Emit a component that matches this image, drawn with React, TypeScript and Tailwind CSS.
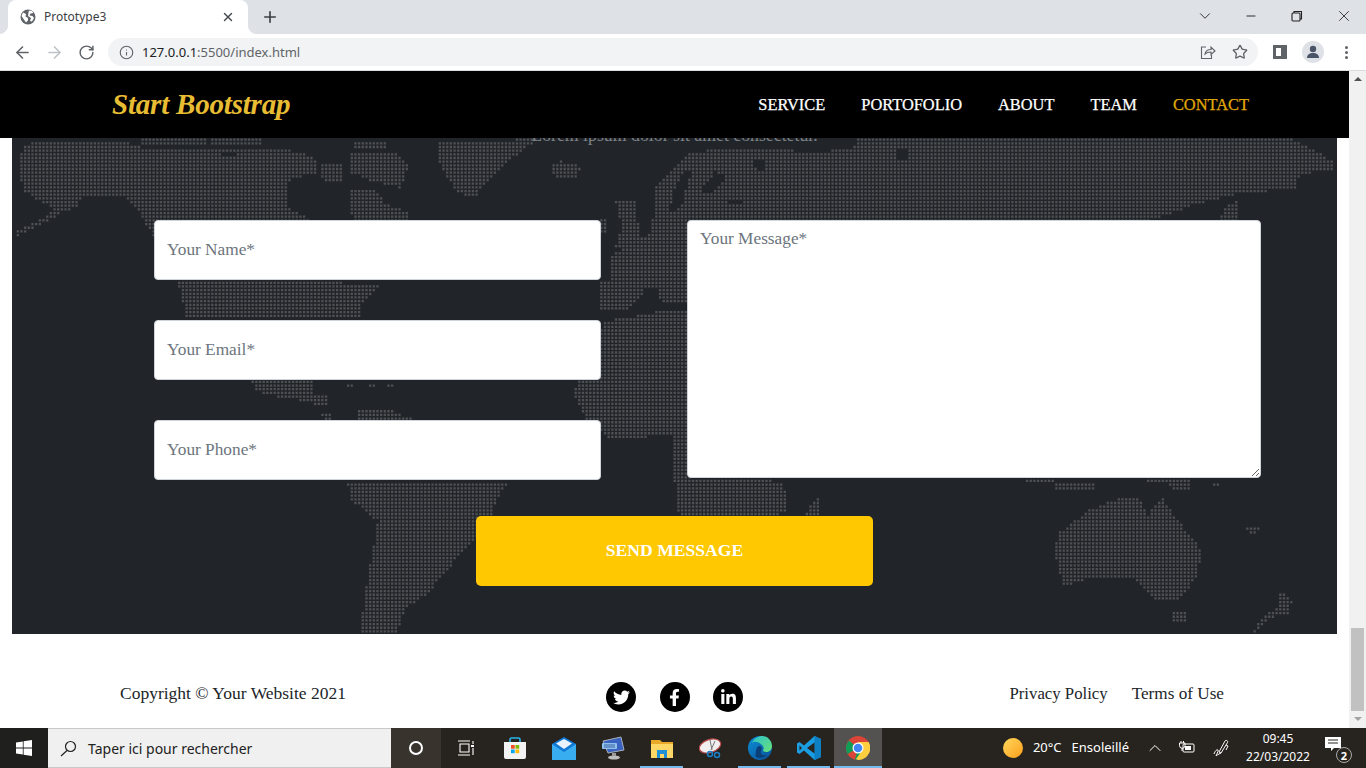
import React from 'react';
import { ArrowLeft, ArrowRight, RotateCw, Info, Star, Plus, X, ChevronDown, ChevronUp, Minus } from 'lucide-react';
import { FaTwitter, FaFacebookF, FaLinkedinIn } from 'react-icons/fa';

// continents in page coordinates, the dot grid is tested against these
const LAND: string[] = [
  // north america
  '22,143 60,139 121,139 139,146 204,146 260,148 300,150 316,158 316,172 290,178 286,187 286,205 308,218 312,224 152,235 139,213 126,197 82,195 74,207 60,212 43,222 14,236 13,230 40,218 52,207 22,190 17,167',
  '139,138 204,138 204,143 139,143',
  '208,138 260,138 260,143 208,143',
  '176,280 377,282 377,288 360,303 358,318 186,318',
  '251,380 312,380 312,392 327,393 328,407 295,398 273,395 256,390',
  '346,381 352,381 352,385 346,385',
  '367,381 373,381 373,385 367,385',
  '387,381 393,381 393,385 387,385',
  // arctic islands and labrador
  '320,163 343,163 343,183 320,178',
  '347,150 395,150 408,165 399,187 370,180 347,170',
  '351,139 386,139 386,147 351,147',
  '347,187 377,190 382,202 394,206 408,213 410,224 352,224 349,205',
  // greenland, iceland
  '438,140 538,138 516,153 486,180 473,197 455,190 438,163',
  '549,163 560,160 579,165 577,175 560,178 552,175',
  // central america, south america
  '319,412 330,412 330,420 325,420',
  '355,410 385,407 400,413 416,420 355,420',
  '345,480 507,480 494,503 492,523 468,543 451,563 427,592 405,607 395,634 360,634 362,603 369,563 377,520 351,500',
  // uk, europe and asia, spain
  '614,198 634,198 640,246 614,248 620,226',
  '600,217 606,217 606,232 600,232',
  '655,183 687,153 720,147 783,146 800,152 850,148 856,138 1290,138 1333,160 1333,168 1299,173 1294,187 1234,193 1195,203 1147,220 1147,224 690,224 690,300 660,300 655,287 611,287 611,253 650,232',
  '600,280 642,280 642,292 626,310 600,310',
  '1216,224 1225,205 1238,197 1238,224',
  // africa
  '572,393 603,320 672,308 690,308 690,478 780,480 787,497 785,510 770,518 679,518 676,507 672,463 672,435 607,437 585,417',
  // madagascar
  '817,497 817,520 800,520 805,510',
  // indonesia
  '1023,478 1052,478 1052,483 1023,483',
  '1052,482 1095,482 1095,490 1052,487',
  '1145,478 1190,478 1190,490 1172,490 1165,483 1145,483',
  '1212,480 1218,480 1218,485 1212,485',
  // australia
  '1056,533 1086,510 1117,497 1138,497 1147,513 1162,497 1177,520 1201,550 1195,577 1177,600 1151,597 1134,577 1091,577 1062,585 1054,553',
  '1169,610 1184,610 1184,622 1171,622',
  // new zealand
  '1275,587 1292,600 1287,612 1277,613 1264,622 1251,634 1262,614 1278,605',
  '1242,527 1260,527 1250,534',
];

// seas and lakes cut back out of the land
const SEAS: string[] = [
  '715,170 725,178 706,194 700,190',
  '726,198 742,198 742,204 726,204',
  '755,158 765,160 762,170 752,166',
  '896,148 910,150 905,160 895,156',
  '672,190 684,170 690,172 680,205 668,212',
  '221,150 234,150 234,156 221,156',
];

const parse = (s: string) => s.split(' ').map(p => p.split(',').map(Number));

const inside = (x: number, y: number, poly: number[][]) => {
  let hit = false;
  for (let i = 0, j = poly.length - 1; i < poly.length; j = i++) {
    const [xi, yi] = poly[i];
    const [xj, yj] = poly[j];
    if (yi > y !== yj > y && x < ((xj - xi) * (y - yi)) / (yj - yi) + xi) hit = !hit;
  }
  return hit;
};

const landPolys = LAND.map(parse);
const seaPolys = SEAS.map(parse);

const buildDots = () => {
  let d = '';
  for (let y = 138.5; y < 634; y += 3.67) {
    for (let x = 13; x < 1337; x += 3.67) {
      if (landPolys.some(p => inside(x, y, p)) && !seaPolys.some(p => inside(x, y, p))) {
        d += `M${x.toFixed(2)} ${y.toFixed(2)}h2.3v2.3h-2.3z`;
      }
    }
  }
  return d;
};

const DOTS = buildDots();

function Map() {
  return (
    <svg className="absolute inset-0 h-full w-full" viewBox="12 138 1325 496" preserveAspectRatio="none">
      <path d={DOTS} fill="#4f5054" />
    </svg>
  );
}

function TabCorner({ flip }: { flip?: boolean }) {
  return (
    <svg width="8" height="8" viewBox="0 0 8 8" className={flip ? 'absolute bottom-0 -right-2' : 'absolute bottom-0 -left-2'}>
      {flip ? <path d="M0 0C0 4 4 8 8 8H0Z" fill="#fff" /> : <path d="M8 0C8 4 4 8 0 8H8Z" fill="#fff" />}
    </svg>
  );
}

function BrowserChrome() {
  return (
    <div className="font-['Noto_Sans',sans-serif]">
      <div className="flex h-[34px] items-end bg-[#dee1e6] pl-2">
        <div className="relative flex h-[34px] w-[240px] items-center rounded-t-lg bg-white pl-3 pr-[13px]">
          <TabCorner />
          <svg width="16" height="16" viewBox="0 0 16 16" className="mr-2 shrink-0">
            <circle cx="8" cy="8" r="7.5" fill="#5f6368" />
            <path d="M3 3.5 6 5l-.5 2.5 2.5 1.5v2.5l-2 2L3.5 10 1.5 7ZM9 1.5l3 .5 1.5 2-3 .5-1 2 3 .5 1.5 2-2 3.5-2-.5 1-3-3-2 .5-3.5Z" fill="#fff" />
          </svg>
          <span className="flex-1 truncate text-[12px] text-[#3c4043]">Prototype3</span>
          <X size={14} strokeWidth={2.4} className="text-[#45484c]" />
          <TabCorner flip />
        </div>
        <Plus size={18} strokeWidth={2.2} className="ml-[13px] mb-2 text-[#3c4043]" />
        <div className="flex-1" />
        <div className="flex h-full w-[180px] items-start pt-[7px] text-[#222]">
          <ChevronDown size={18} strokeWidth={1.2} className="ml-[10px]" />
          <Minus size={14} strokeWidth={1.6} className="ml-[30px] mt-[2px]" />
          <svg width="12" height="12" viewBox="0 0 12 12" className="ml-[33px] mt-[3px]" fill="none" stroke="#222" strokeWidth="1.1">
            <rect x="1" y="3" width="8" height="8" rx="1" />
            <path d="M3 3V1.5h7.5V9H9" />
          </svg>
          <X size={18} strokeWidth={1.1} className="ml-[32px]" />
        </div>
      </div>
      <div className="flex h-[37px] items-center border-b border-[#dadce0] bg-white pl-[13px]">
        <ArrowLeft size={19} strokeWidth={2} className="text-[#5f6368]" />
        <ArrowRight size={19} strokeWidth={2} className="ml-[13px] text-[#bdc1c6]" />
        <RotateCw size={17} strokeWidth={2.1} className="ml-[14px] text-[#5f6368]" />
        <div className="ml-[13px] flex h-[28px] w-[1150px] items-center rounded-full bg-[#f1f3f4] pl-[11px] pr-[9px]">
          <Info size={15} strokeWidth={1.8} className="text-[#5f6368]" />
          <span className="ml-[8px] flex-1 text-[13px] leading-none text-[#202124]">
            127.0.0.1<span className="text-[#5f6368]">:5500/index.html</span>
          </span>
          <svg width="16" height="16" viewBox="0 0 16 16" fill="none" stroke="#5f6368" strokeWidth="1.1" className="mr-[16px]">
            <path d="M6 3H1.5v11.5h10V11" />
            <path d="M5 10c.5-3 3-4.500 6-4.500V3l4 4-4 3.500V8c-2.500 0-4.500.5-6 2Z" />
          </svg>
          <Star size={16} strokeWidth={2} className="text-[#5f6368] mr-[1px]" />
        </div>
        <div className="ml-[15px] flex h-[14px] w-[14px] justify-start border-[3px] border-r-[6px] border-[#5f6368] bg-white" />
        <div className="ml-[15px] flex h-[22px] w-[22px] items-center justify-center overflow-hidden rounded-full bg-[#dee1e6]">
          <svg width="14" height="14" viewBox="0 0 14 14" fill="#4a5568">
            <circle cx="7" cy="4" r="3.200" />
            <path d="M1 13c0-3.500 2.500-5 6-5s6 1.500 6 5Z" />
          </svg>
        </div>
        <div className="ml-[21px] flex flex-col gap-[2px]">
          <span className="h-[3px] w-[3px] rounded-full bg-[#5f6368]" />
          <span className="h-[3px] w-[3px] rounded-full bg-[#5f6368]" />
          <span className="h-[3px] w-[3px] rounded-full bg-[#5f6368]" />
        </div>
      </div>
    </div>
  );
}

function Navbar() {
  const links = ['SERVICE', 'PORTOFOLIO', 'ABOUT', 'TEAM'];
  return (
    <nav className="relative z-10 flex h-[67px] shrink-0 items-center justify-between bg-black pl-[112px] pr-[100px]">
      <span className="mt-[-1px] text-[29px] font-bold italic leading-none tracking-[-0.2px] text-[#e8bd33]">Start Bootstrap</span>
      <div className="flex items-center gap-[36px] pt-[1px] text-[16.4px] text-white [-webkit-text-stroke:0.25px_currentColor]">
        {links.map(l => (
          <span key={l}>{l}</span>
        ))}
        <span className="text-[#e0aa08]">CONTACT</span>
      </div>
    </nav>
  );
}

const fieldClass =
  'block rounded-[4px] border border-[#ced4da] bg-white px-3 text-[17.3px] outline-none placeholder:text-[#6c757d]';

function ContactSection() {
  return (
    <section className="relative mx-3 h-[496px] shrink-0 overflow-hidden bg-[#212529]">
      <Map />
      <div className="relative">
        <p className="mt-[-15px] h-[32px] text-center text-[17.8px] leading-6 text-[#7b8086]">
          Lorem ipsum dolor sit amet consectetur.
        </p>
        <form className="mt-[65px]">
          <div className="flex gap-[86px] pl-[142px]">
            <div className="flex w-[447px] shrink-0 flex-col gap-[40px]">
              <input className={`${fieldClass} h-[60px] w-full`} placeholder="Your Name*" />
              <input className={`${fieldClass} h-[60px] w-full`} placeholder="Your Email*" />
              <input className={`${fieldClass} h-[60px] w-full`} placeholder="Your Phone*" />
            </div>
            <textarea className={`${fieldClass} h-[258px] w-[574px] shrink-0 py-[5px]`} placeholder="Your Message*" />
          </div>
          <button
            type="button"
            className="mx-auto mt-[36px] block h-[70px] w-[397px] rounded-[5px] bg-[#ffc800] pb-[2px] text-[17.6px] font-bold text-white"
          >
            SEND MESSAGE
          </button>
        </form>
      </div>
    </section>
  );
}

function Footer() {
  return (
    <footer className="grid flex-1 grid-cols-[1fr_auto_1fr] items-start bg-white px-[120px] pt-[48px] text-[16.75px] leading-6 text-[#212529]">
      <span className="mt-[-1px] text-[17.5px]">Copyright © Your Website 2021</span>
      <div className="flex gap-[23.500px]">
        {[FaTwitter, FaFacebookF, FaLinkedinIn].map((Icon, i) => (
          <span key={i} className="flex h-[30px] w-[30px] items-center justify-center rounded-full bg-black text-white">
            <Icon size={17} />
          </span>
        ))}
      </div>
      <div className="flex justify-end gap-[24px] pr-[5px]">
        <span>Privacy Policy</span>
        <span className="text-[17.2px]">Terms of Use</span>
      </div>
    </footer>
  );
}

function Scrollbar() {
  return (
    <div className="flex w-[17px] shrink-0 flex-col items-center bg-[#f1f1f1]">
      <span className="mt-[6px] h-0 w-0 border-x-[4px] border-b-[4px] border-x-transparent border-b-[#505050]" />
      <div className="mt-auto h-[83px] w-[13px] bg-[#c1c1c1]" />
      <span className="mb-[7px] mt-[6px] h-0 w-0 border-x-[4px] border-t-[4px] border-x-transparent border-t-[#a3a3a3]" />
    </div>
  );
}

function TaskIcon({ children, active, open }: { children: React.ReactNode; active?: boolean; open?: boolean }) {
  return (
    <div className={`relative flex h-10 w-[49px] items-center justify-center ${active ? 'bg-[#545250]' : ''}`}>
      {children}
      {(open || active) && <span className="absolute bottom-0 left-[3px] right-[3px] h-[2px] bg-[#76b9ed]" />}
    </div>
  );
}

function Taskbar() {
  return (
    <div className="flex h-10 shrink-0 items-center bg-[#27241f] font-['Noto_Sans',sans-serif] text-white">
      <div className="flex h-10 w-[48px] items-center justify-center bg-[#1f1f1e]">
        <svg width="16" height="16" viewBox="0 0 16 16" fill="#fff">
          <path d="M0 2.400 6.800 1.400V7.600H0ZM7.600 1.300 16 0V7.600H7.600ZM0 8.400H6.800V14.600L0 13.600ZM7.600 8.400H16V16L7.600 14.700Z" />
        </svg>
      </div>
      <div className="flex h-10 w-[343px] items-center border-y border-[#c8c8c8] bg-[#f0f0f0] pl-[12px] text-[14px] text-[#222]">
        <svg width="17" height="17" viewBox="0 0 17 17" fill="none" stroke="#222" strokeWidth="1.2">
          <circle cx="10.500" cy="6.500" r="5" />
          <path d="M7 10.500 1 16" />
        </svg>
        <span className="ml-[11px]">Taper ici pour rechercher</span>
      </div>
      <div className="flex h-10 w-[50px] items-center justify-center bg-[#38332d]">
        <span className="h-[14px] w-[14px] rounded-full border-2 border-white" />
      </div>
      <div className="flex w-[49px] justify-center">
        <svg width="18" height="16" viewBox="0 0 18 16" fill="none" stroke="#fff" strokeWidth="1.100">
          <path d="M1 1h12M3 4h9v8H3ZM1 15h12M16 1v3M16 8v7" />
          <rect x="14" y="5" width="3" height="2" fill="#fff" stroke="none" />
        </svg>
      </div>
      <TaskIcon>
        <svg width="24" height="24" viewBox="0 0 24 24">
          <path d="M7 6V3.500A1.500 1.500 0 0 1 8.500 2h7A1.500 1.500 0 0 1 17 3.500V6" fill="none" stroke="#2bb4e8" strokeWidth="1.600" />
          <path d="M1 6h22v15a2 2 0 0 1-2 2H3a2 2 0 0 1-2-2Z" fill="#f3f3f3" />
          <rect x="8" y="9" width="3.700" height="3.700" fill="#f25022" />
          <rect x="12.500" y="9" width="3.700" height="3.700" fill="#7fba00" />
          <rect x="8" y="13.500" width="3.700" height="3.700" fill="#00a4ef" />
          <rect x="12.500" y="13.500" width="3.700" height="3.700" fill="#ffb900" />
        </svg>
      </TaskIcon>
      <TaskIcon>
        <svg width="24" height="23" viewBox="0 0 24 23">
          <path d="M0 7 12 0l12 7v16H0Z" fill="#0f78d4" />
          <path d="M0 7l12 8 12-8v16H0Z" fill="#38adf0" />
          <path d="M4 6.500 12 2l8 4.500L12 12Z" fill="#e8f2fb" />
        </svg>
      </TaskIcon>
      <TaskIcon>
        <svg width="24" height="24" viewBox="0 0 24 24">
          <path d="M2 5 20 1l3 13-16 3Z" fill="#3a62c0" stroke="#a8aebb" strokeWidth="1" />
          <rect x="1" y="7" width="15" height="6" rx="1" fill="#8fc0ee" />
          <path d="M3 9h11M3 11h11" stroke="#2a4a90" strokeWidth="0.800" />
          <ellipse cx="13" cy="21.500" rx="6" ry="2" fill="#bdbdbd" />
          <rect x="11" y="17" width="4" height="3" fill="#9a9a9a" />
        </svg>
      </TaskIcon>
      <TaskIcon open>
        <svg width="22" height="20" viewBox="0 0 22 20">
          <path d="M0 2h9l2 2h11v16H0Z" fill="#e8a92a" />
          <path d="M0 6h22v14H0Z" fill="#ffd766" />
          <path d="M6 12h10v8h-3v-4H9v4H6Z" fill="#1f8fd8" />
        </svg>
      </TaskIcon>
      <TaskIcon>
        <svg width="24" height="22" viewBox="0 0 24 22">
          <ellipse cx="11" cy="9" rx="11" ry="6.500" transform="rotate(-18 11 9)" fill="#f0eeee" stroke="#b84a4a" strokeWidth="1.200" />
          <path d="M11 3l2 10M16 4l-4 9" stroke="#777" strokeWidth="1" />
          <circle cx="11" cy="17" r="2.500" fill="none" stroke="#1a7fc8" strokeWidth="1.500" />
          <circle cx="18" cy="18" r="2.500" fill="none" stroke="#1a7fc8" strokeWidth="1.500" />
        </svg>
      </TaskIcon>
      <TaskIcon open>
        <svg width="24" height="24" viewBox="0 0 24 24">
          <defs>
            <linearGradient id="edgeA" x1="0" y1="0" x2="1" y2="1">
              <stop offset="0" stopColor="#0c8fd8" />
              <stop offset="1" stopColor="#0a4f96" />
            </linearGradient>
            <linearGradient id="edgeB" x1="0" y1="0" x2="1" y2="1">
              <stop offset="0" stopColor="#2fc2c8" />
              <stop offset="1" stopColor="#68e07a" />
            </linearGradient>
          </defs>
          <circle cx="12" cy="12" r="12" fill="url(#edgeA)" />
          <path d="M4 7C6 2 11 0 14 0c6 0 10 5 10 10 0 4-3 6-6 6-2 0-3-1-3-2 1-1 1-3-1-5C10 5 6 5 4 7Z" fill="url(#edgeB)" />
          <path d="M8 15c0-3 2-5 4-5 2 1 2 3 1 5-1 3 2 5 6 4-3 3-8 4-11 2-1-1 0-4 0-6Z" fill="#0b3f78" />
        </svg>
      </TaskIcon>
      <TaskIcon open>
        <svg width="24" height="24" viewBox="0 0 24 24">
          <path d="M17.500 0 24 3v18l-6.500 3L7 14.500 2.500 18 0 16.500v-9L2.500 6 7 9.500Z" fill="#1b9de2" />
          <path d="M17.500 0 24 3v18l-6.500 3Z" fill="#0f7fc4" />
          <path d="M17.500 6.500v11L10 12Z" fill="#27231f" />
          <path d="M2.500 9.500v5L5 12Z" fill="#27231f" />
        </svg>
      </TaskIcon>
      <div className="relative ml-[1px] flex h-10 w-[48px] items-center justify-center bg-[#545250]">
        <svg width="24" height="24" viewBox="0 0 24 24">
          <circle cx="12" cy="12" r="12" fill="#db4437" />
          <path d="M12 12 1.600 18A12 12 0 0 1 3 4.500Z" fill="#0f9d58" />
          <path d="M12 12 22.400 18A12 12 0 0 1 9 23.600Z" fill="#0f9d58" />
          <path d="M12 6h10.600A12 12 0 0 1 12 24l-2-1 5-7Z" fill="#ffcd40" />
          <circle cx="12" cy="12" r="5.500" fill="#fff" />
          <circle cx="12" cy="12" r="4.300" fill="#4285f4" />
        </svg>
        <span className="absolute bottom-0 left-0 right-0 h-[2px] bg-[#76b9ed]" />
      </div>
      <div className="flex-1" />
      <div className="mr-[10px] h-[20px] w-[20px] rounded-full bg-gradient-to-br from-[#ffd75a] to-[#fb9f10]" />
      <span className="text-[13px]">20°C</span>
      <span className="ml-[10px] text-[13px]">Ensoleillé</span>
      <ChevronUp size={20} strokeWidth={1.2} className="ml-[16px]" />
      <svg width="17" height="12" viewBox="0 0 17 12" fill="none" stroke="#fff" strokeWidth="1" className="ml-[13px] mb-[2px]">
        <path d="M3 0v2M5.500 0v2M1.500 2h5.500v2.500A2.500 2.500 0 0 1 1.500 4.500ZM4 7v3" />
        <rect x="5" y="3" width="11" height="8" rx="1" />
        <rect x="7" y="5" width="6" height="4" fill="#fff" stroke="none" />
      </svg>
      <svg width="18" height="18" viewBox="0 0 18 18" fill="none" stroke="#fff" strokeWidth="1" className="ml-[18px]">
        <path d="M6 13 12 2c1-1.500 3.500 0 2.500 1.500L8 14Zm2 1-2 1M1 15c1-3 3-5 4-4s-2 5-2 6c0 0 1-1 3-2M13 6l2 1-2 4" />
      </svg>
      <div className="ml-[9px] flex w-[76px] flex-col items-center text-[12px] leading-[18px]">
        <span>09:45</span>
        <span>22/03/2022</span>
      </div>
      <div className="relative ml-[9px] mr-[17px] h-[24px] w-[24px]">
        <svg width="18" height="16" viewBox="0 0 18 16" fill="#fff" className="absolute left-0 top-[1px]">
          <path d="M0 0h16v11H9l-3 3v-3H0Z" />
          <path d="M3 3h10M3 6h10" stroke="#27241f" strokeWidth="1" />
        </svg>
        <span className="absolute bottom-[-3px] right-[-3px] flex h-[16px] w-[16px] items-center justify-center rounded-full border border-[#aaa] bg-[#27241f] text-[11px] font-bold leading-none">
          2
        </span>
      </div>
    </div>
  );
}

export default function App() {
  return (
    <div className="flex h-[768px] w-[1366px] flex-col overflow-hidden bg-white font-['Liberation_Serif',serif]">
      <BrowserChrome />
      <div className="flex min-h-0 flex-1">
        <div className="flex min-w-0 flex-1 flex-col">
          <Navbar />
          <ContactSection />
          <Footer />
        </div>
        <Scrollbar />
      </div>
      <Taskbar />
    </div>
  );
}
